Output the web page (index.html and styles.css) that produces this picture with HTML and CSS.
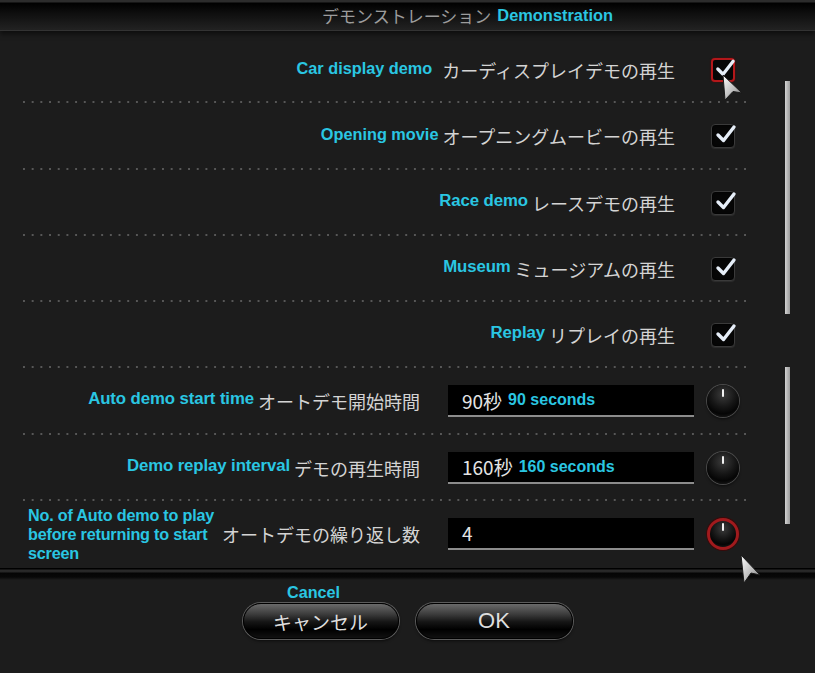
FILE: index.html
```html
<!DOCTYPE html>
<html lang="ja">
<head>
    <meta charset="UTF-8">
    <title>デモンストレーション</title>
    <link rel="stylesheet" href="styles.css">
</head>
<body>
    <div class="screen">
        <header class="titlebar">
            <span class="title-jp">デモンストレーション</span>
            <span class="title-en">Demonstration</span>
        </header>

        <main class="panel">
            <div class="rows">
                <div class="row check-row">
                    <div class="label wide"><span class="en">Car display demo</span><span class="jp">カーディスプレイデモの再生</span></div>
                    <span class="checkbox focused">
                        <svg viewBox="0 0 24 24" width="24" height="24"><path d="M5 12 L10.5 17.5 L21 4" /></svg>
                    </span>
                </div>
                <div class="row check-row">
                    <div class="label"><span class="en">Opening movie</span><span class="jp">オープニングムービーの再生</span></div>
                    <span class="checkbox">
                        <svg viewBox="0 0 24 24" width="24" height="24"><path d="M5 12 L10.5 17.5 L21 4" /></svg>
                    </span>
                </div>
                <div class="row check-row">
                    <div class="label"><span class="en tall">Race demo</span><span class="jp">レースデモの再生</span></div>
                    <span class="checkbox">
                        <svg viewBox="0 0 24 24" width="24" height="24"><path d="M5 12 L10.5 17.5 L21 4" /></svg>
                    </span>
                </div>
                <div class="row check-row">
                    <div class="label"><span class="en tall">Museum</span><span class="jp">ミュージアムの再生</span></div>
                    <span class="checkbox">
                        <svg viewBox="0 0 24 24" width="24" height="24"><path d="M5 12 L10.5 17.5 L21 4" /></svg>
                    </span>
                </div>
                <div class="row check-row">
                    <div class="label"><span class="en tall">Replay</span><span class="jp">リプレイの再生</span></div>
                    <span class="checkbox">
                        <svg viewBox="0 0 24 24" width="24" height="24"><path d="M5 12 L10.5 17.5 L21 4" /></svg>
                    </span>
                </div>

                <div class="row value-row">
                    <div class="label"><span class="en tall">Auto demo start time</span><span class="jp">オートデモ開始時間</span></div>
                    <div class="field"><span class="num">90秒</span><span class="unit">90 seconds</span></div>
                    <span class="knob"></span>
                </div>
                <div class="row value-row">
                    <div class="label"><span class="en tall">Demo replay interval</span><span class="jp">デモの再生時間</span></div>
                    <div class="field"><span class="num">160秒</span><span class="unit">160 seconds</span></div>
                    <span class="knob"></span>
                </div>
                <div class="row value-row last">
                    <div class="label split"><span class="en tall multi">No. of Auto demo to play<br>before returning to start<br>screen</span><span class="jp">オートデモの繰り返し数</span></div>
                    <div class="field"><span class="num">4</span></div>
                    <span class="knob active"></span>
                </div>
            </div>

            <div class="scrollbar">
                <span class="thumb upper"></span>
                <span class="thumb lower"></span>
            </div>
        </main>

        <div class="band"></div>

        <footer class="footer">
            <div class="buttons">
                <div class="btn-col">
                    <span class="cancel-en">Cancel</span>
                    <button class="pill">キャンセル</button>
                </div>
                <div class="btn-col">
                    <button class="pill ok">OK</button>
                </div>
            </div>
        </footer>

        <!-- mouse pointers captured in the shot -->
        <svg class="pointer p1" width="24" height="30" viewBox="0 0 24 30">
            <defs>
                <linearGradient id="silver" x1="0" y1="0" x2="1" y2="1">
                    <stop offset="0" stop-color="#ffffff"/>
                    <stop offset="0.6" stop-color="#b8b8b8"/>
                    <stop offset="1" stop-color="#6a6a6a"/>
                </linearGradient>
            </defs>
            <path d="M1 1 L20 19 L11 17.5 L3 26 Z" fill="url(#silver)" stroke="#1a1a1a" stroke-width="1"/>
        </svg>
        <svg class="pointer p2" width="24" height="32" viewBox="0 0 24 32">
            <path d="M1 1 L20 21 L11 19 L4 29 Z" fill="url(#silver)" stroke="#1a1a1a" stroke-width="1"/>
        </svg>
    </div>
</body>
</html>
```

FILE: styles.css
```css
body {
    margin: 0;
    background: #1c1c1c;
    font-family: 'Liberation Sans', Arial, sans-serif;
}

.screen {
    position: relative;
    width: 815px;
    height: 673px;
    overflow: hidden;
    background: #1c1c1c;
}

/* title bar */
.titlebar {
    height: 31px;
    display: flex;
    align-items: center;
    justify-content: center;
    padding-left: 120px;
    box-sizing: border-box;
    background: linear-gradient(to bottom, #2c2c2c 0, #2c2c2c 2px, #000 3px, #0d0d0d 40%, #222 100%);
    border-bottom: 1px solid #333;
    box-shadow: 0 3px 5px rgba(0,0,0,0.55);
}

.title-jp {
    font-family: 'Noto Sans CJK JP', sans-serif;
    font-size: 17px;
    color: #9c9c9c;
    margin-right: 6px;
}

.title-en {
    font-weight: bold;
    font-size: 16.4px;
    color: #2ac6e2;
}

/* settings list */
.panel {
    display: flex;
    height: 537px;
}

.rows {
    width: 725px;
    margin-left: 23px;
    padding-top: 6px;
}

.row {
    height: 66.25px;
    display: flex;
    align-items: center;
    justify-content: flex-end;
    box-sizing: border-box;
    background-image: radial-gradient(circle at 1px 1px, #575757 0.9px, transparent 1.3px);
    background-size: 8.7px 2px;
    background-repeat: repeat-x;
    background-position: 0 bottom;
}

.row.last {
    background-image: none;
}

.label {
    display: flex;
    align-items: center;
    justify-content: flex-end;
    white-space: nowrap;
}

.label .en {
    color: #2ac6e2;
    font-weight: bold;
    font-size: 16.3px;
    margin-bottom: 4px;
}

.label .en.tall {
    font-size: 16.8px;
    letter-spacing: -0.1px;
}

.label .jp {
    font-family: 'Noto Sans CJK JP', sans-serif;
    font-size: 18px;
    color: #d4d4d4;
    margin-left: 4px;
    flex-shrink: 0;
}

.label.wide .jp {
    margin-left: 10px;
}

.check-row {
    padding-right: 13px;
}

.check-row .label {
    margin-right: 36px;
}

.checkbox {
    width: 22px;
    height: 22px;
    border-radius: 4px;
    background: #060606;
    border: 1px solid #3a3a3a;
    box-shadow: 0 1px 1px #2e2e2e, inset 0 0 3px #000;
    display: flex;
    align-items: center;
    justify-content: center;
}

.checkbox svg {
    fill: none;
    stroke: #e6eef8;
    stroke-width: 3.4;
    stroke-linecap: round;
    stroke-linejoin: round;
    margin: -2px -3px 0 0;
}

.checkbox.focused {
    border: 2px solid #b3171a;
    width: 20px;
    height: 20px;
    box-shadow: 0 0 2px #5a0b0b;
}

.value-row {
    padding-right: 9px;
}

.value-row .label {
    flex: 1;
}

.label.split {
    justify-content: space-between;
    padding-left: 5px;
}

.label .en.multi {
    font-size: 16.2px;
    letter-spacing: -0.2px;
    line-height: 19px;
    margin-bottom: 0;
    padding-top: 2px;
}

.field {
    width: 246px;
    height: 32px;
    margin-left: 28px;
    margin-right: 13px;
    box-sizing: border-box;
    background: #000;
    border-bottom: 2px solid #8c8c8c;
    display: flex;
    align-items: center;
    padding-left: 14px;
}

.field .num {
    font-family: 'Noto Sans CJK JP', sans-serif;
    font-size: 19px;
    color: #e4e4e4;
}

.field .unit {
    color: #2ac6e2;
    font-weight: bold;
    font-size: 16px;
    margin-left: 6px;
}

.knob {
    width: 32px;
    height: 32px;
    border-radius: 50%;
    box-sizing: border-box;
    display: flex;
    justify-content: center;
    padding-top: 4px;
    background: radial-gradient(circle at 50% 30%, #3b3b3b 0, #161616 45%, #050505 70%, #2a2a2a 100%);
    box-shadow: 0 0 0 1px #4a4a4a, 0 2px 3px rgba(0,0,0,0.6);
}

.knob::after {
    content: '';
    width: 2px;
    height: 8px;
    background: #f2f2f2;
    border-radius: 1px;
}

.knob.active {
    border: 3px solid #a11a1d;
    padding-top: 2px;
    box-shadow: 0 0 0 1px #3a0a0a;
}

/* scroll indicator */
.scrollbar {
    display: flex;
    flex-direction: column;
    margin-left: 37px;
    padding-top: 50px;
}

.thumb {
    width: 5px;
    background: linear-gradient(to right, #d2d2d2, #9a9a9a);
}

.thumb.upper {
    height: 233px;
}

.thumb.lower {
    height: 157px;
    margin-top: 53px;
}

/* divider above the buttons */
.band {
    height: 12px;
    background: linear-gradient(to bottom, #000 0, #000 1px, #2a2a2a 2px, #262626 4px, #050505 5px, #080808 9px, #1c1c1c 12px);
}

.footer {
    padding-top: 3px;
}

.buttons {
    display: flex;
    justify-content: center;
    align-items: flex-end;
    gap: 17px;
}

.btn-col {
    display: flex;
    flex-direction: column;
    align-items: center;
}

.cancel-en {
    color: #2ac6e2;
    font-weight: bold;
    font-size: 16.2px;
    line-height: 18px;
    margin-bottom: 2px;
    margin-right: 14px;
}

.pill {
    width: 156px;
    height: 36px;
    border-radius: 18px;
    border: 1px solid #000;
    box-shadow: 0 0 0 1px #5c5c5c, 0 2px 3px rgba(0,0,0,0.6);
    background: linear-gradient(to bottom, #6a6a6a 0%, #3c3c3c 30%, #161616 52%, #000 75%, #111 100%);
    color: #dedede;
    font-family: 'Noto Sans CJK JP', sans-serif;
    font-size: 19px;
    line-height: 1;
    padding: 0;
}

.pill.ok {
    width: 157px;
    font-family: 'Liberation Sans', Arial, sans-serif;
    font-size: 22px;
}

.pointer {
    position: absolute;
}

.pointer.p1 {
    left: 722px;
    top: 74px;
}

.pointer.p2 {
    left: 740px;
    top: 554px;
}
```
